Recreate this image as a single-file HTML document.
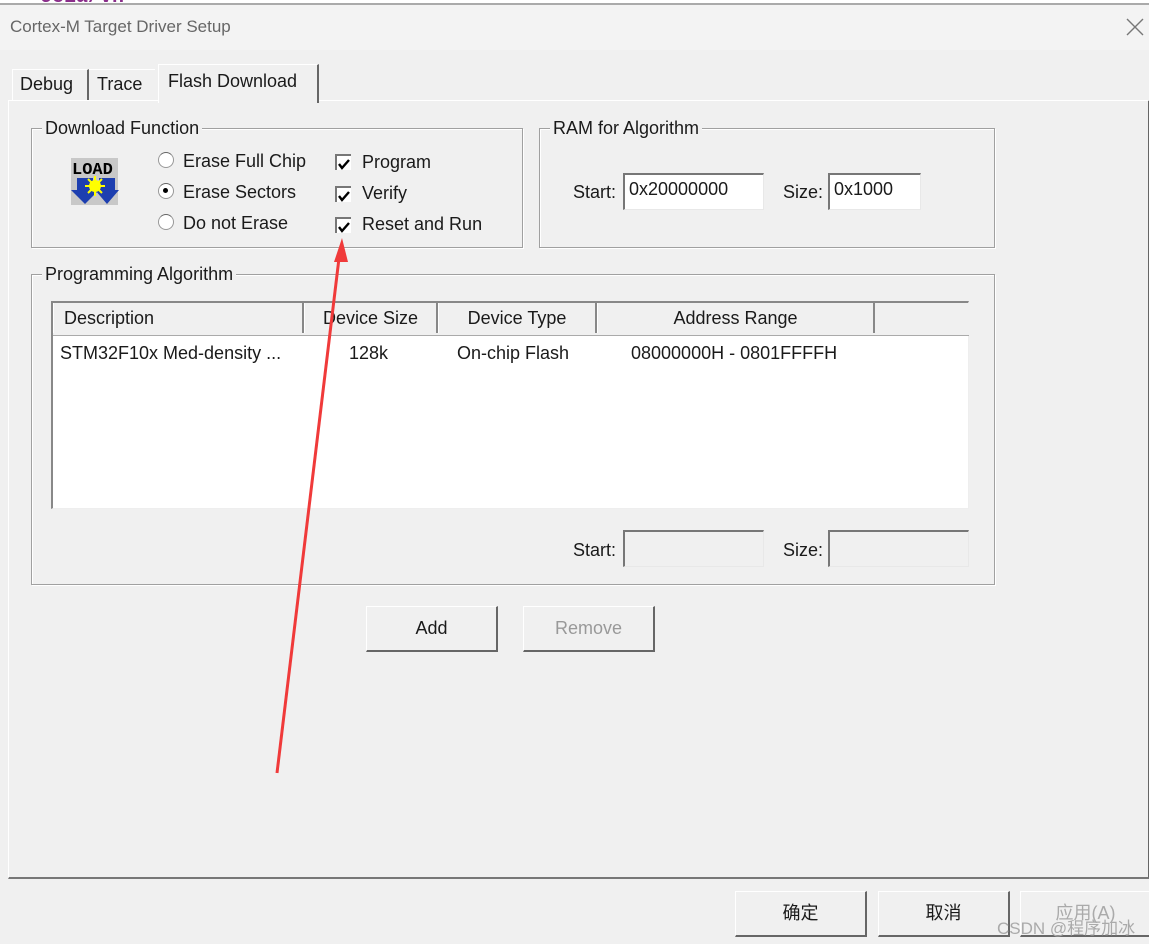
<!DOCTYPE html>
<html><head><meta charset="utf-8"><style>
body{margin:0;width:1149px;height:944px;background:#f0f0f0;position:relative;overflow:hidden;font-family:"Liberation Sans","Noto Sans CJK SC",sans-serif;color:#1a1a1a;font-size:18px}
.a{position:absolute;white-space:nowrap}
.grp{position:absolute;border:1px solid #a0a0a0;box-shadow:inset 1px 1px 0 #fff,1px 1px 0 #fff}
.lg{position:absolute;background:#f0f0f0;padding:0 3px;top:-12px;left:10px;font-size:18px}
.edit{position:absolute;background:#fff;border-top:2px solid #777;border-left:2px solid #777;border-right:1px solid #e8e8e8;border-bottom:1px solid #e8e8e8;box-sizing:border-box;padding:4px 4px;font-size:18px}
.btn{position:absolute;border:1px solid #fff;border-right:2px solid #666;border-bottom:2px solid #666;box-sizing:border-box;background:#f0f0f0;text-align:center;font-size:18px}
.cb{position:absolute;width:14px;height:14px;border-top:2px solid #777;border-left:2px solid #777;background:#fff}
.rb{position:absolute;width:14px;height:14px;border-radius:50%;border:1px solid #999;border-top-color:#666;background:#fff}
.th{position:absolute;top:0;height:30px;border-right:2px solid #888;border-left:1px solid #fff;box-sizing:border-box;line-height:30px;font-size:18px}
</style></head><body>
<div class="a" style="left:0;top:0;width:1149px;height:5px;background:#fff"></div>
<div class="a" style="left:40px;top:-14px;color:#8a2d8a;font-family:'Liberation Mono';font-size:20px;font-weight:bold">ce1a/vn</div>
<div class="a" style="left:0;top:3px;width:1149px;height:2px;background:#aaa"></div>
<div class="a" style="left:0;top:5px;width:1149px;height:45px;background:#f3f3f3"></div>
<div class="a" style="left:10px;top:17px;color:#666;font-size:17px">Cortex-M Target Driver Setup</div>
<svg class="a" style="left:1126px;top:18px" width="18" height="18"><path d="M1 1L17 17M17 1L1 17" stroke="#777" stroke-width="1.4"/></svg>

<div class="a" style="left:12px;top:69px;width:74px;height:31px;border-top:1px solid #fff;border-left:1px solid #fff;border-right:2px solid #666"></div>
<div class="a" style="left:20px;top:74px">Debug</div>
<div class="a" style="left:89px;top:69px;width:66px;height:31px;border-top:1px solid #fff"></div>
<div class="a" style="left:97px;top:74px">Trace</div>
<div class="a" style="left:158px;top:64px;width:158px;height:38px;border-top:1px solid #fff;border-left:1px solid #fff;border-right:2px solid #666;background:#f0f0f0;z-index:2"></div>
<div class="a" style="left:168px;top:71px;z-index:3">Flash Download</div>
<div class="a" style="left:8px;top:100px;width:1139px;height:776px;border-top:1px solid #fff;border-left:1px solid #fff;border-right:2px solid #666;border-bottom:2px solid #777"></div>

<div class="grp" style="left:31px;top:128px;width:490px;height:118px"><div class="lg" style="top:-11px">Download Function</div></div>
<svg class="a" style="left:71px;top:158px" width="48" height="48">
<rect x="0" y="0" width="47" height="47" fill="#c8c8c8"/>
<text x="1" y="16" font-family="Liberation Mono" font-weight="bold" font-size="17" fill="#000">LOAD</text>
<path d="M2 20h16v12h6l-14 14L-4 32h6z" fill="#1d3fb0" transform="translate(4,0)"/>
<path d="M28 20h16v12h4l-12 14L24 32h4z" fill="#1d3fb0"/>
<circle cx="24" cy="28" r="6" fill="#ff0"/><path d="M24 18v20M14 28h20M17 21l14 14M31 21l-14 14" stroke="#ff0" stroke-width="2"/>
</svg>
<div class="rb" style="left:158px;top:152px"></div><div class="a" style="left:183px;top:151px">Erase Full Chip</div>
<div class="rb" style="left:158px;top:183px"><div style="width:5px;height:5px;background:#000;border-radius:50%;margin:4px"></div></div><div class="a" style="left:183px;top:182px">Erase Sectors</div>
<div class="rb" style="left:158px;top:214px"></div><div class="a" style="left:183px;top:213px">Do not Erase</div>
<div class="cb" style="left:335px;top:154px"><svg width="14" height="14"><path d="M2 6l3 4 7-8" stroke="#000" stroke-width="2.4" fill="none"/></svg></div><div class="a" style="left:362px;top:152px">Program</div>
<div class="cb" style="left:335px;top:186px"><svg width="14" height="14"><path d="M2 6l3 4 7-8" stroke="#000" stroke-width="2.4" fill="none"/></svg></div><div class="a" style="left:362px;top:183px">Verify</div>
<div class="cb" style="left:335px;top:217px"><svg width="14" height="14"><path d="M2 6l3 4 7-8" stroke="#000" stroke-width="2.4" fill="none"/></svg></div><div class="a" style="left:362px;top:214px">Reset and Run</div>

<div class="grp" style="left:539px;top:128px;width:454px;height:118px"><div class="lg" style="top:-11px">RAM for Algorithm</div></div>
<div class="a" style="left:573px;top:182px">Start:</div>
<div class="edit" style="left:623px;top:173px;width:141px;height:37px">0x20000000</div>
<div class="a" style="left:783px;top:182px">Size:</div>
<div class="edit" style="left:828px;top:173px;width:93px;height:37px">0x1000</div>

<div class="grp" style="left:31px;top:274px;width:962px;height:309px"><div class="lg" style="top:-11px">Programming Algorithm</div></div>
<div class="a" style="left:51px;top:301px;width:918px;height:208px;background:#fff;border-top:2px solid #888;border-left:2px solid #888;border-right:1px solid #eee;border-bottom:1px solid #eee;box-sizing:border-box">
 <div class="a" style="left:0;top:0;width:916px;height:32px;background:#f0f0f0;border-bottom:1px solid #aaa"></div>
 <div class="th" style="left:0;width:251px;padding-left:10px">Description</div>
 <div class="th" style="left:251px;width:134px;text-align:center">Device Size</div>
 <div class="th" style="left:385px;width:159px;text-align:center">Device Type</div>
 <div class="th" style="left:544px;width:278px;text-align:center">Address Range</div>
 <div class="a" style="left:7px;top:40px">STM32F10x Med-density ...</div>
 <div class="a" style="left:296px;top:40px">128k</div>
 <div class="a" style="left:404px;top:40px">On-chip Flash</div>
 <div class="a" style="left:578px;top:40px">08000000H - 0801FFFFH</div>
</div>
<div class="a" style="left:573px;top:540px">Start:</div>
<div class="edit" style="left:623px;top:530px;width:141px;height:37px;background:#f0f0f0"></div>
<div class="a" style="left:783px;top:540px">Size:</div>
<div class="edit" style="left:828px;top:530px;width:141px;height:37px;background:#f0f0f0"></div>

<div class="btn" style="left:366px;top:606px;width:132px;height:46px;line-height:42px">Add</div>
<div class="btn" style="left:523px;top:606px;width:132px;height:46px;line-height:42px;color:#999">Remove</div>

<div class="btn" style="left:735px;top:891px;width:132px;height:46px;line-height:42px">确定</div>
<div class="btn" style="left:878px;top:891px;width:132px;height:46px;line-height:42px">取消</div>
<div class="btn" style="left:1020px;top:891px;width:132px;height:46px;line-height:42px;color:#aaa">应用(A)</div>
<div class="a" style="left:997px;top:914px;color:#aaa;font-size:17px">CSDN @程序加冰</div>

<svg class="a" style="left:0;top:0" width="1149" height="944">
<path d="M277 773L340 250" stroke="#f03a3a" stroke-width="3"/>
<path d="M342 238L334 262L348 262Z" fill="#f03a3a"/>
</svg>
</body></html>
